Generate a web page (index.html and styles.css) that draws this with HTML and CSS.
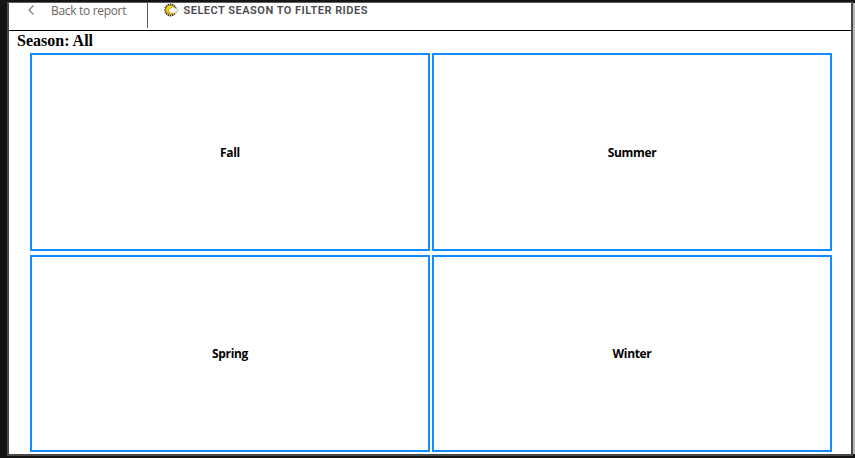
FILE: index.html
```html
<!DOCTYPE html>
<html lang="en">
<head>
<meta charset="utf-8">
<title>Season filter</title>
<link rel="stylesheet" href="styles.css">
</head>
<body>
<div class="frame">
<main class="report">
  <header class="bar">
    <div class="back">
      <svg class="chevron" width="8" height="12" viewBox="0 0 8 12"><path d="M6.500 1.500 2 6l4.500 4.500" fill="none" stroke="#777" stroke-width="1.1"/></svg>
      <span class="back-label">Back to report</span>
    </div>
    <div class="visual">
      <svg class="sun" width="16" height="14" viewBox="0 0 16 14">
        <path d="M7.500 .5v13M1.200 7h12M3 2.500l9 9M12 2.500l-9 9M5 1l5 12M10 1 5 13M1.600 4.500l11.600 5M1.600 9.500l11.600-5" stroke="#17130c" stroke-width="1.2"/>
        <circle cx="7.500" cy="7" r="5" fill="#ffd800" stroke="#4b3a0b" stroke-width=".5"/>
        <path d="M3 5.500a4.700 4.700 0 0 0 7 5.300L6 9.500 4 7.500z" fill="#f5a800"/>
        <path d="M6.300 9.300C4.700 7.600 5.800 5.500 7.500 5.400c.7-2.100 3.900-2.300 4.700-.5 2.400-.2 3.300 2.600 1.500 3.700-.5 1.900-2.800 2.300-3.900 1.300-1.300.8-2.900.5-3.500-.6z" fill="#fffdf4" stroke="#4d4434" stroke-width=".4"/>
      </svg>
      <span class="visual-title">SELECT SEASON TO FILTER RIDES</span>
    </div>
  </header>
  <h1 class="heading">Season: All</h1>
  <section class="grid">
    <div class="tile tile-upper">Fall</div>
    <div class="tile tile-upper">Summer</div>
    <div class="tile">Spring</div>
    <div class="tile">Winter</div>
  </section>
</main>
</div>
</body>
</html>
```
FILE: styles.css
```css
* { box-sizing: border-box; }
body { margin: 0; background: #141414; overflow: hidden; }
.frame {
  width: 855px;
  height: 458px;
  padding: 2px 2px 2px 7px;
  background: linear-gradient(#b8b8b8, #b8b8b8) 853px 3px / 2px 451px no-repeat, #141414;
}
.report {
  height: 454px;
  background: #fff;
  border: 2px solid #4a4a4a;
  border-top: 1px solid #5e5e5e;
  display: flex;
  flex-direction: column;
}
.bar {
  height: 28px;
  flex: none;
  display: flex;
  border-bottom: 1px solid #000;
}
.back {
  width: 139px;
  height: 25px;
  padding-left: 18px;
  border-right: 1px solid #605e5c;
  display: flex;
}
.chevron { margin-top: 1px; }
.back-label {
  margin-left: 16px;
  font: 12px/16px "Open Sans", sans-serif;
  letter-spacing: -.32px;
  color: #6b6462;
  white-space: nowrap;
}
.visual { display: flex; padding-left: 15px; }
.sun { display: block; }
.visual-title {
  margin-left: 4.5px;
  font: 600 11px/15px Roboto, sans-serif;
  letter-spacing: .5px;
  color: #4a494d;
  white-space: nowrap;
}
.heading {
  margin: 1px 0 0 8px;
  font: 700 16px/18px "Liberation Serif", serif;
  color: #000;
}
.grid {
  margin: 3px 0 0 21px;
  display: grid;
  grid-template-columns: 400px 400px;
  grid-template-rows: 198px 197px;
  gap: 4px 2px;
}
.tile {
  border: 2px solid #118dff;
  display: flex;
  align-items: center;
  justify-content: center;
  font: 700 12px/16px "Open Sans", sans-serif;
  letter-spacing: -.35px;
  color: #000;
}
.tile-upper { padding-top: 2px; }
```
